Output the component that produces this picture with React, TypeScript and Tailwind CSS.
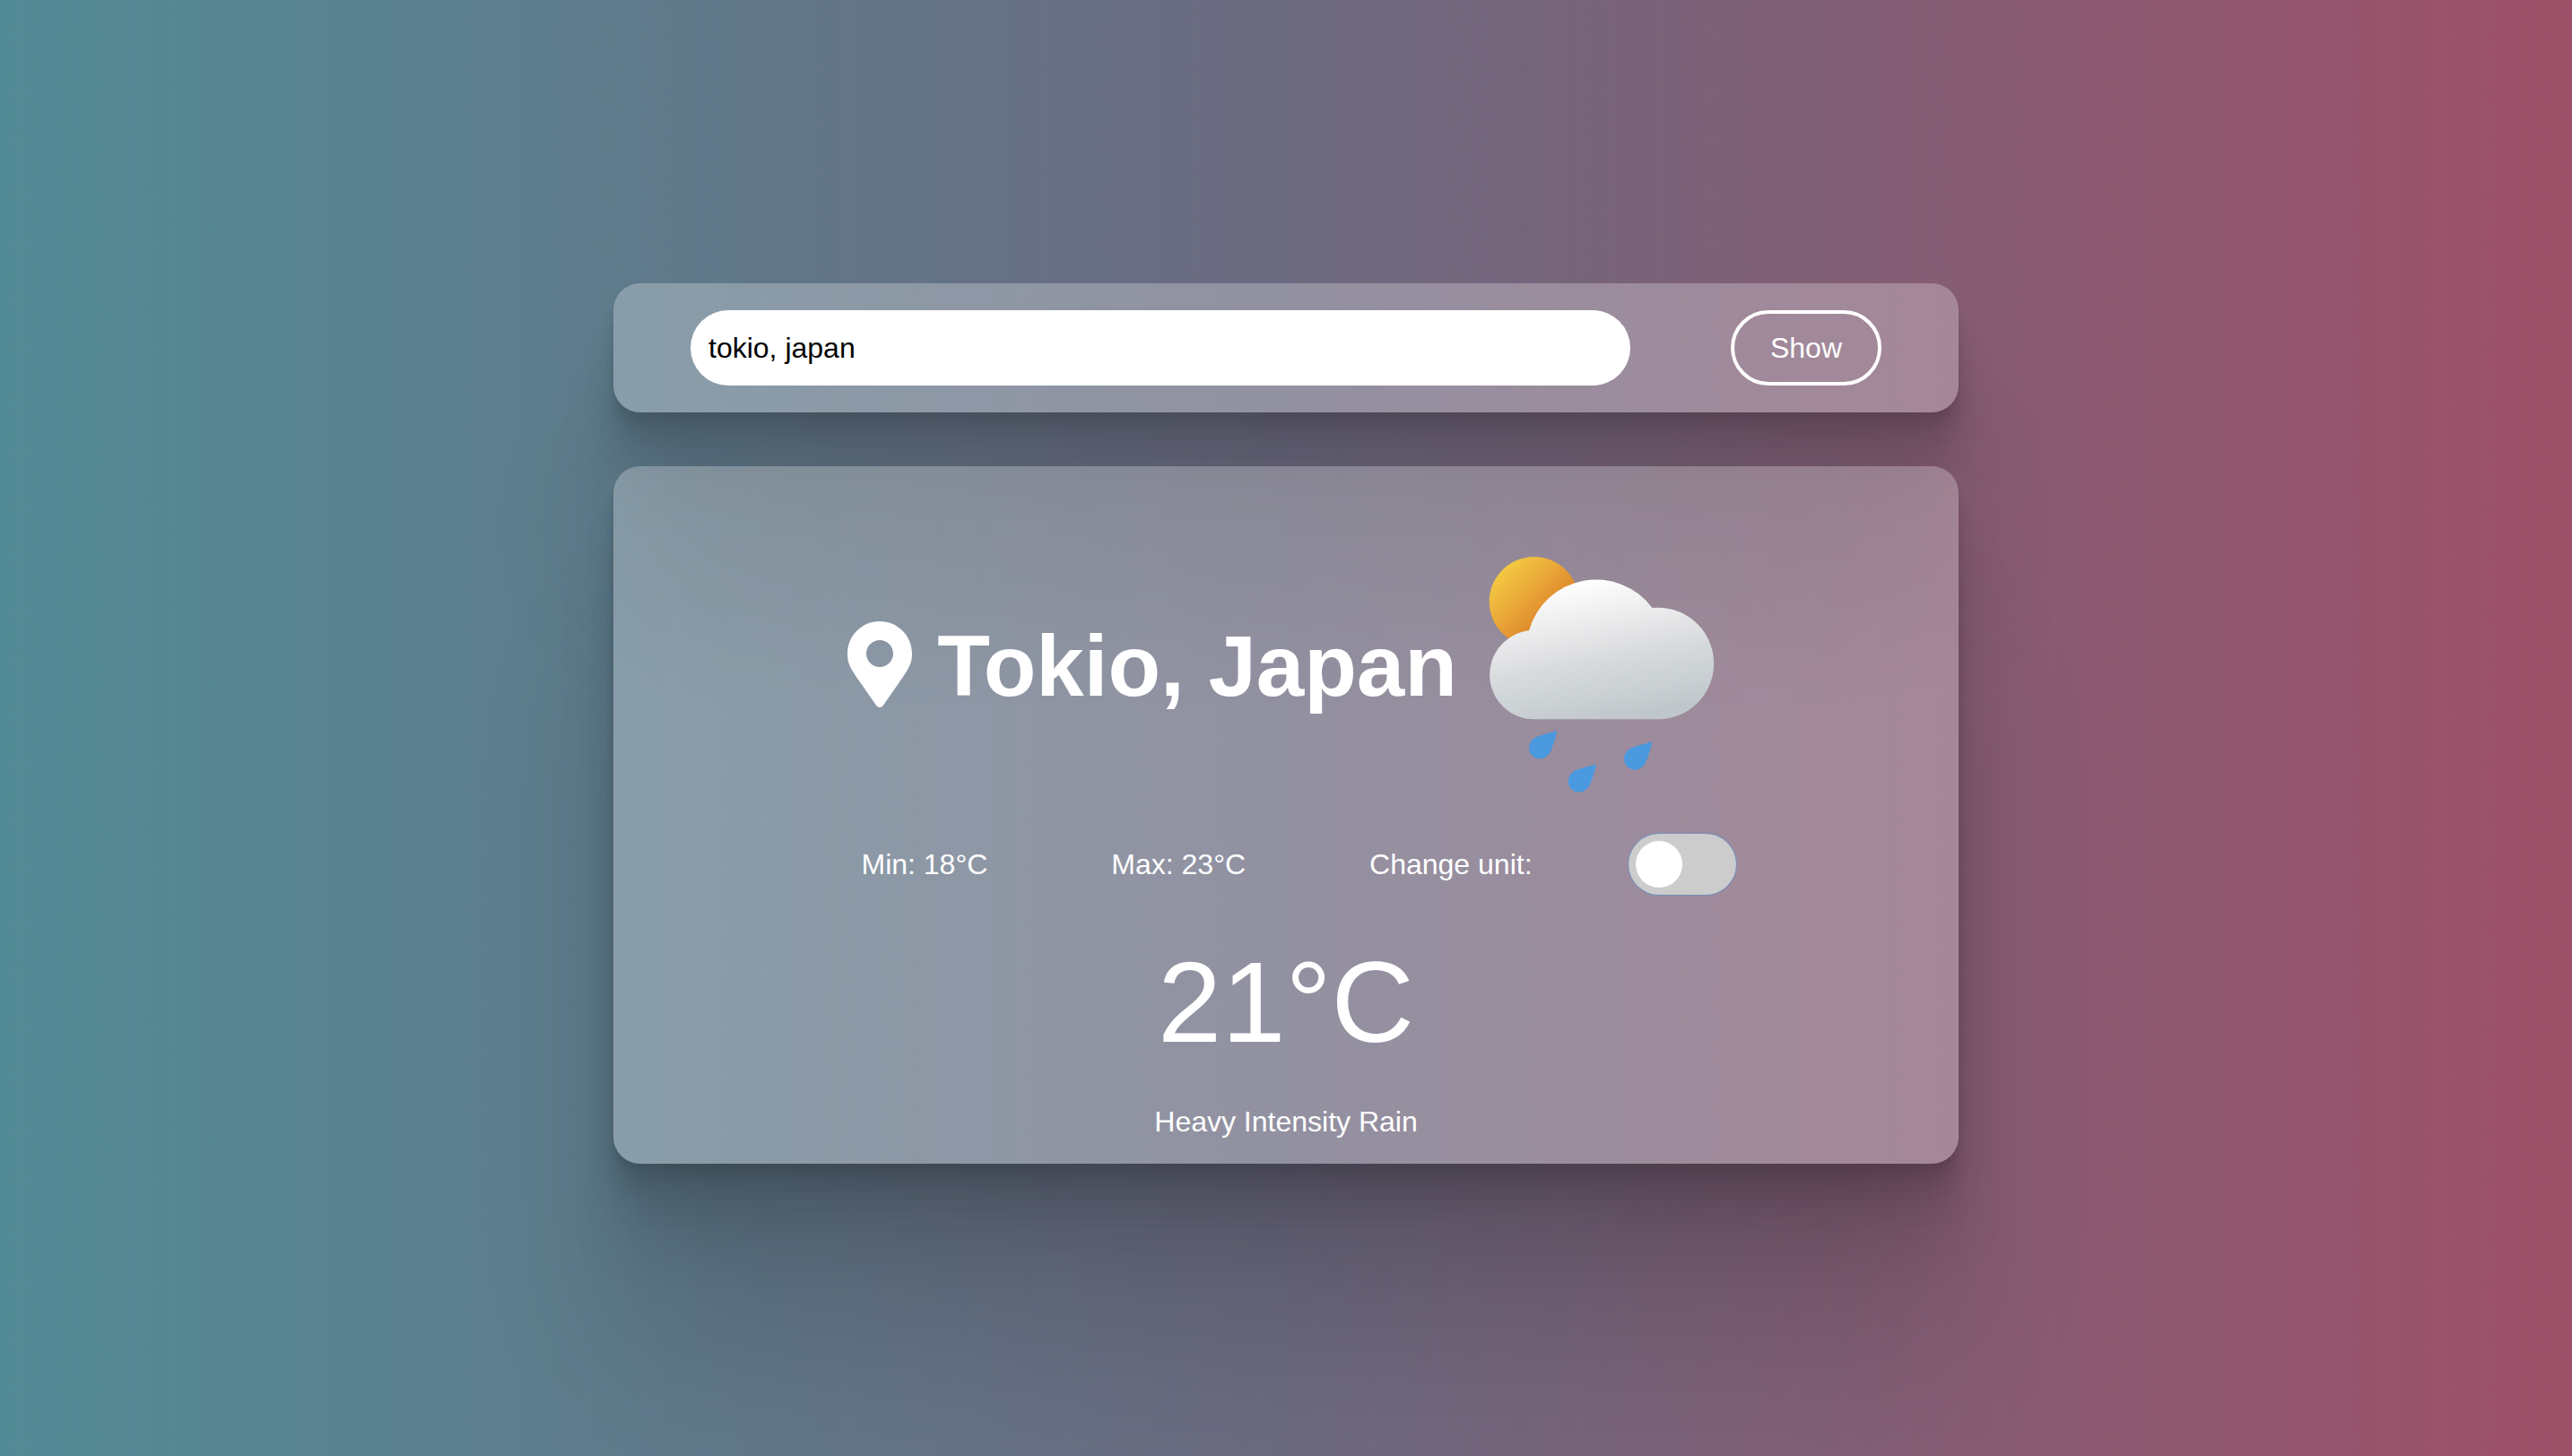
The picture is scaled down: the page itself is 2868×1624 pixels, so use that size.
import { useState } from "react";

const cardClass =
  "rounded-[30px] bg-white/26 shadow-[0_6px_4px_rgba(0,0,0,0.034),0_13px_11px_rgba(0,0,0,0.048),0_25px_20px_rgba(0,0,0,0.06),0_45px_36px_rgba(0,0,0,0.072),0_84px_67px_rgba(0,0,0,0.086),0_200px_160px_rgba(0,0,0,0.12)]";

function PinIcon() {
  return (
    <svg viewBox="0 0 384 512" className="mb-1 h-24 w-[72px] fill-white" aria-hidden="true">
      <path d="M172.268 501.67C26.97 291.031 0 269.413 0 192 0 85.961 85.961 0 192 0s192 85.961 192 192c0 77.413-26.97 99.031-172.268 309.67-9.535 13.774-29.93 13.773-39.464 0zM192 272c44.183 0 80-35.817 80-80s-35.817-80-80-80-80 35.817-80 80 35.817 80 80 80z" />
    </svg>
  );
}

const drop = "M0 0C-6 30 -15 52 -20 66C-27 83 -42 94 -57 94C-78 94 -94 78 -94 57C-94 41 -84 27 -68 20C-52 14 -30 8 0 0Z";

function RainIcon() {
  return (
    <svg viewBox="120 90 756 795" className="h-[265px] w-[252px]" role="img" aria-label="Sun, cloud and rain">
      <defs>
        <linearGradient id="sun" gradientUnits="userSpaceOnUse" x1="166" y1="137" x2="340" y2="311">
          <stop offset="0" stopColor="#f4c943" />
          <stop offset="1" stopColor="#dc802a" />
        </linearGradient>
        <linearGradient id="cloud" gradientUnits="userSpaceOnUse" x1="440" y1="168" x2="535" y2="640">
          <stop offset="0" stopColor="#ffffff" />
          <stop offset="0.5" stopColor="#dedfe1" />
          <stop offset="0.55" stopColor="#d8dcde" />
          <stop offset="1" stopColor="#c0c7cb" />
        </linearGradient>
      </defs>
      <circle cx="272" cy="243" r="150" fill="url(#sun)" />
      <path
        d="M272 637A149 149 0 0 1 255 340A233 233 0 0 1 667 264A187 187 0 1 1 686 637Z"
        fill="url(#cloud)"
      />
      <g fill="#4b99de">
        <path d={drop} transform="translate(349 675)" />
        <path d={drop} transform="translate(667 712)" />
        <path d={drop} transform="translate(480 787)" />
      </g>
    </svg>
  );
}

export default function App() {
  const [city, setCity] = useState("tokio, japan");
  const [fahrenheit, setFahrenheit] = useState(false);

  return (
    <main className="flex min-h-screen flex-col items-center justify-center gap-[60px] bg-[linear-gradient(to_right,#528b96_0%,#6c6a80_50%,#9e5068_100%)] pb-[10px] font-['Liberation_Sans',Arial,sans-serif] text-[32px] leading-10 text-white">
      <form
        className={`flex w-full max-w-[1500px] items-center justify-between px-[86px] py-[30px] ${cardClass}`}
        onSubmit={(e) => e.preventDefault()}
      >
        <input
          type="text"
          aria-label="City"
          value={city}
          onChange={(e) => setCity(e.target.value)}
          className="h-[84px] min-w-0 max-w-[1048px] flex-1 rounded-full bg-white px-5 text-black outline-none"
        />
        <button type="submit" className="h-[84px] w-[168px] rounded-full border-4 border-white">
          Show
        </button>
      </form>

      <section className={`flex w-full max-w-[1500px] flex-col items-center pt-[100px] pb-[27px] ${cardClass}`}>
        <div className="flex items-center gap-[35px] pr-[11px]">
          <h1 className="flex items-center gap-7 pb-5 text-[96px] leading-none font-bold">
            <PinIcon />
            Tokio, Japan
          </h1>
          <RainIcon />
        </div>

        <div className="mt-[45px] flex items-center gap-[138px] pl-7">
          <p>Min: 18°C</p>
          <p>Max: 23°C</p>
          <div className="flex items-center gap-[107px]">
            <label htmlFor="unit">Change unit:</label>
            <input
              id="unit"
              type="checkbox"
              role="switch"
              checked={fahrenheit}
              onChange={(e) => setFahrenheit(e.target.checked)}
              className="h-[68px] w-[120px] cursor-pointer appearance-none rounded-full bg-[#ccc] p-2 shadow-[0_0_2px_#2196f3] before:block before:size-[52px] before:rounded-full before:bg-white checked:bg-[#2196f3] checked:before:ml-[52px]"
            />
          </div>
        </div>

        <p className="mt-14 text-[128px] leading-none">21°C</p>
        <p className="mt-[49px]">Heavy Intensity Rain</p>
      </section>
    </main>
  );
}
